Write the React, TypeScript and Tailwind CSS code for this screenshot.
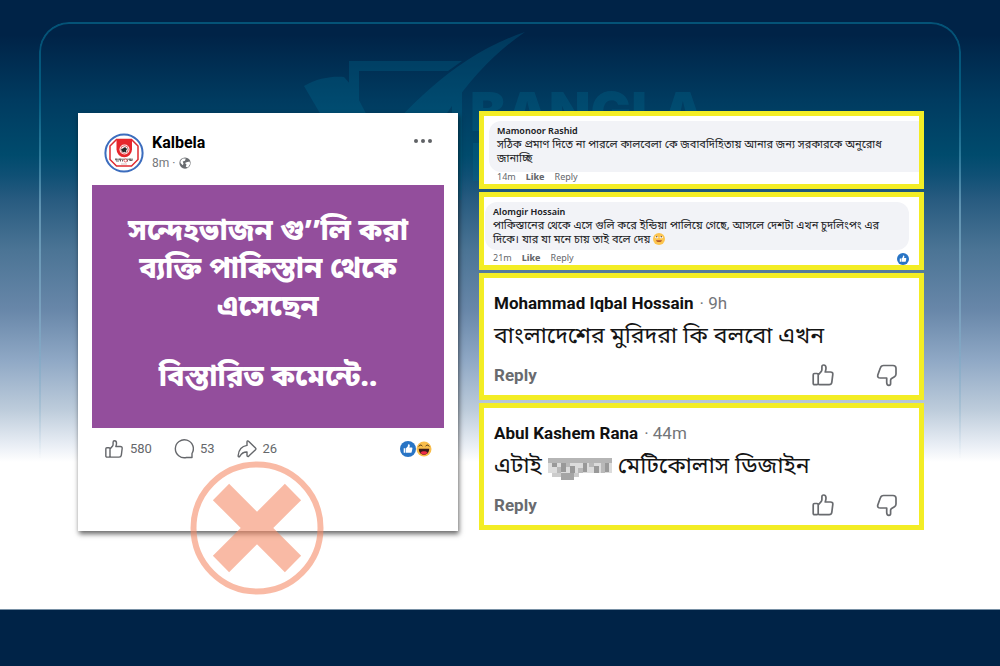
import React from "react";

const thumb =
  "M3.500 10.500h2.500c.8 0 1.200.5 1.200 1.300v8.700c0 .8-.5 1.200-1.300 1.200H3.500c-.8 0-1.300-.5-1.300-1.300v-8.600c0-.8.4-1.300 1.300-1.300ZM7.200 12l3.100-3.600c.5-.6.6-1.300.6-2.200V3.800C10.900 2.500 11.600 2 12.600 2c1.500 0 2.400 1.200 2.400 3 0 1.500-.3 2.700-.8 4h5.300c1.700 0 2.500 1 2.300 2.400l-1 8c-.2 1.400-1.200 2.300-2.700 2.300H8.500c-.9 0-1.300-.4-1.300-1.200";

function Thumb({ className }: { className: string }) {
  return (
    <svg viewBox="0 0 24 24" className={className} fill="none" stroke="currentColor" strokeWidth="1.700" strokeLinejoin="round" strokeLinecap="round" aria-hidden="true">
      <path d={thumb} />
    </svg>
  );
}

function ThumbDown() {
  return (
    <svg viewBox="0 0 24 24" className="size-6" fill="none" stroke="currentColor" strokeWidth="1.700" strokeLinejoin="round" aria-hidden="true">
      <path d="M8.500 2.500h9.500c2 0 3 .9 3 2.700v5.800c0 1.300-.5 2.100-1.500 2.700l-2.900 1.700c-.7.400-1 1-1 1.800v3.200c0 1.300-.7 1.900-1.700 1.900-1.500 0-2.200-1-2.200-2.800v-4.500H5.300c-2.100 0-3-1.200-2.500-3l2.500-7c.5-1.600 1.500-2.500 3.200-2.500Z" />
    </svg>
  );
}

function LikeBadge({ className }: { className: string }) {
  return (
    <svg viewBox="0 0 16 16" className={className} role="img" aria-label="Like">
      <circle cx="8" cy="8" r="8" fill="#2874c5" />
      <path d="M3.700 7.300h1.700v4.500H3.700zM6 7.300l1.700-1.700c.3-.4.200-1 .2-1.500 0-.7.500-1 1-.9.800.2 1 1 .9 1.800l-.4 1.600h2c.8 0 1.200.5 1 1.200l-.7 3.100c-.2.700-.6.900-1.300.9H6z" fill="#fff" />
    </svg>
  );
}

function Smile({ laugh }: { laugh?: boolean }) {
  return laugh ? (
    <svg viewBox="0 0 16 16" className="size-4" role="img" aria-label="Haha">
      <circle cx="8" cy="8" r="7.500" fill="#f9bd4a" />
      <path d="M2.800 7.800h10.400c0 3.800-2.200 6-5.200 6s-5.200-2.200-5.200-6Z" fill="#3c1b18" />
      <path d="M4.500 11.500c1.500-1.600 5.500-1.600 7 0-1.500 2.700-5.500 2.700-7 0Z" fill="#ef2b46" />
      <path d="M2.800 5.500c.8-1.800 2.700-1.900 3.600-.2M9.600 5.300c.9-1.700 2.800-1.600 3.600.2" stroke="#473017" strokeWidth="1" fill="none" />
    </svg>
  ) : (
    <svg viewBox="0 0 16 16" className="inline size-3 align-[-2px]" role="img" aria-label="Smiling face">
      <circle cx="8" cy="8" r="8" fill="#fcc44e" />
      <ellipse cx="5" cy="5.500" rx="1.900" ry="1.600" fill="#fff" />
      <ellipse cx="11" cy="5.500" rx="1.900" ry="1.600" fill="#fff" />
      <circle cx="5" cy="5" r="1" fill="#6b4519" />
      <circle cx="11" cy="5" r="1" fill="#6b4519" />
      <path d="M4 9.500h8c-.5 3.500-7.500 3.500-8 0Z" fill="#b0552a" />
    </svg>
  );
}

function Avatar() {
  return (
    <svg viewBox="0 0 40 40" className="size-10 shrink-0" role="img" aria-label="Kalbela logo">
      <circle cx="20" cy="20" r="18.600" fill="#fff" stroke="#3c6dbe" strokeWidth="2" />
      <path d="M12.500 6.500h15l6.500 6.500v13.500L27.500 33h-15L6 26.500V13Z" fill="#fff" stroke="#df2b31" strokeWidth="1.500" />
      <path d="M12.500 6h15.500v10.500a7.700 7.700 0 0 1-15.500 0Z" fill="#e7262c" />
      <circle cx="20.500" cy="16.500" r="5" fill="#fff" />
      <circle cx="20.500" cy="16.500" r="3.800" fill="none" stroke="#df2b31" strokeWidth=".8" />
      <path d="m16.500 16.500 5-3 .5 1.600 2.500.5-2 1.400v3l-2.500-1-1 1Z" fill="#252525" stroke="#fff" strokeWidth=".5" />
      <path d="M11 26.200h18M12 28h3m1.500-1v1.500m2-1.500v1.500m5-1.500v1.500m2-1h3M12 25.500v2m4-2v2m10-2v2" stroke="#302626" strokeWidth=".7" />
      <circle cx="21.500" cy="27.500" r="1.500" fill="#fff" stroke="#d93035" strokeWidth=".7" />
      <path d="M17 31h6" stroke="#b99" strokeWidth=".6" />
    </svg>
  );
}

function Watermark() {
  return (
    <div className="pointer-events-none absolute inset-x-0 top-0 mx-auto h-60 w-[1000px] text-[#006c91] opacity-30" aria-hidden="true">
      <svg viewBox="0 0 1000 240" className="size-full" fill="currentColor">
        <path d="M304 86c13-8 29-10 40-9l7 8 50 95h-42Z" />
        <path d="M349 61h113l-14 10h-89v119h93V95l10-12v117H349Z" />
        <path d="M365 155c47-51 91-100 160-123-57 39-87 94-121 151-16-1-28-8-39-28Z" />
        <rect x="473" y="143" width="8" height="38" />
        <text x="470" y="131" fontFamily="Inter" fontWeight="900" fontSize="54">BANGLA</text>
      </svg>
    </div>
  );
}

function SmallActions({ time }: { time: string }) {
  return (
    <div className="flex gap-2.5 text-[9px] leading-3 text-[#65676b]">
      <span>{time}</span>
      <button className="font-bold">Like</button>
      <button>Reply</button>
    </div>
  );
}

function LargeComment({ name, time, children }: { name: string; time: string; children: React.ReactNode }) {
  return (
    <article className="h-[127px] border-[5px] border-[#f3ed25] bg-white pt-[15px] pr-5 pl-2.5">
      <header className="flex gap-1.5 font-[Roboto] text-[17px] leading-5 text-[#737579]">
        <h2 className="font-bold text-[#111]">{name}</h2>
        <span>· {time}</span>
      </header>
      <p className="mt-2.5 text-[23px] leading-7 whitespace-nowrap text-[#151515]">{children}</p>
      <div className="mt-3 flex items-center justify-between text-[#696b6f]">
        <button className="font-[Roboto] text-[17px] leading-6 font-bold">Reply</button>
        <div className="flex gap-10">
          <button aria-label="Like"><Thumb className="size-6" /></button>
          <button aria-label="Dislike"><ThumbDown /></button>
        </div>
      </div>
    </article>
  );
}

export default function App() {
  return (
    <main className="relative flex min-h-screen flex-col bg-[linear-gradient(#002347_0px,#002347_35px,#003b60_100px,#004b6d_155px,#0f5075_175px,#285b80_200px,#4b7495_250px,#6887a9_310px,#8fa8c5_360px,#bdccdb_410px,#e9eef5_445px,#ffffff_462px)] font-['Noto_Sans_Bengali','Noto_Sans',sans-serif]">
      <div className="pointer-events-none absolute inset-x-[39px] top-[22px] h-[438px] rounded-t-[30px] border-2 border-b-0 border-[#087397] opacity-60 [mask-image:linear-gradient(black_25%,transparent)]" />
      <div className="pointer-events-none absolute inset-x-[39px] top-[100px] h-[360px] border-x-2 border-[#a5c0d8] opacity-50 [mask-image:linear-gradient(transparent,black_30%,black_60%,transparent)]" />
      <Watermark />
      <div className="relative grid grow grid-cols-[380fr_445fr] items-start gap-[21px] pt-[111px] pr-[76px] pb-14 pl-[78px]">
        <article className="relative mt-0.5 h-[418px] bg-white px-3.5 pt-5 shadow-[1px_3px_5px_rgba(0,0,0,0.6)]">
          <header className="flex h-[52px] items-start gap-2 pl-3 font-[Roboto]">
            <Avatar />
            <div>
              <h1 className="text-base leading-5 font-bold text-black">Kalbela</h1>
              <div className="mt-0.5 flex items-center gap-1 text-[12px] leading-4 text-[#75777b]">
                <span>8m ·</span>
                <svg viewBox="0 0 16 16" className="size-3" role="img" aria-label="Public">
                  <circle cx="8" cy="8" r="7.500" fill="#696c70" />
                  <path d="m2 5 3-3 4 0-1 3-3 1 1 3-1 2-3-3ZM10 7l4-1 1 3-3 5-3-1 1-3-2-2Z" fill="#fff" />
                </svg>
              </div>
            </div>
            <button aria-label="More" className="mr-3 ml-auto flex h-4 items-center gap-[3px]">
              <i className="size-1 rounded-full bg-[#606266]" />
              <i className="size-1 rounded-full bg-[#606266]" />
              <i className="size-1 rounded-full bg-[#606266]" />
            </button>
          </header>
          <div className="h-[243px] bg-[#934e9c] pt-[29px] text-center text-[29px] leading-[38px] font-extrabold text-white">
            <p>সন্দেহভাজন গু’’লি করা<br />ব্যক্তি পাকিস্তান থেকে<br />এসেছেন</p>
            <p className="mt-8">বিস্তারিত কমেন্টে..</p>
          </div>
          <footer className="flex h-[42px] items-center px-3 font-[Roboto] text-[13px] text-[#65676b]">
            <button className="flex items-center gap-1.5"><Thumb className="size-5" />580</button>
            <button className="ml-[22px] flex items-center gap-1.5">
              <svg viewBox="0 0 20 20" className="size-5" fill="none" stroke="currentColor" strokeWidth="1.400" strokeLinejoin="round" aria-hidden="true"><path d="M18 14.500v4h-5.500A9 9 0 1 1 18 14.500Z" /></svg>53
            </button>
            <button className="ml-[22px] flex items-center gap-1.5">
              <svg viewBox="0 0 20 20" className="size-5" fill="none" stroke="currentColor" strokeWidth="1.400" strokeLinejoin="round" aria-hidden="true"><path d="M10 3c0-1.200 1-1.400 1.800-.6l6.700 6.500c.6.600.6 1.300 0 1.900l-6.700 6.300c-.8.700-1.800.4-1.800-.6V13c-3.400-.2-5.200 1-7 4-.9 1.400-2 1-1.800-.5C1.700 10.800 4.500 7.200 10 6.400Z" /></svg>26
            </button>
            <span className="ml-auto flex"><LikeBadge className="size-4" /><Smile laugh /></span>
          </footer>
          <svg viewBox="0 0 134 134" className="absolute top-[348px] left-[112px] size-[134px]" fill="none" stroke="#f58a65" opacity=".58" role="img" aria-label="False">
            <circle cx="67" cy="67" r="63.500" strokeWidth="6" />
            <path d="M31 31 67 67 103 31M31 103 67 67 103 103" strokeWidth="23" />
          </svg>
        </article>
        <section className="flex flex-col gap-[3px]" aria-label="Comments">
          <article className="h-[78px] border-[5px] border-[#f3ed25] bg-white pt-[5px] pl-[5px]">
            <div className="h-[51px] rounded-l-xl bg-[#f2f3f7] px-2 pt-[5px] text-[#202124]">
              <h2 className="text-[9px] leading-3 font-semibold">Mamonoor Rashid</h2>
              <p className="text-[11px] leading-[14px]">সঠিক প্রমাণ দিতে না পারলে কালবেলা কে জবাবদিহিতায় আনার জন্য সরকারকে অনুরোধ<br />জানাচ্ছি</p>
            </div>
            <div className="pl-2"><SmallActions time="14m" /></div>
          </article>
          <article className="h-[78px] border-[5px] border-[#f3ed25] bg-white pt-[5px] pr-[10px] pl-px">
            <div className="h-12 rounded-xl bg-[#f2f3f7] px-2 pt-[5px] text-[#202124]">
              <h2 className="text-[9px] leading-3 font-semibold">Alomgir Hossain</h2>
              <p className="text-[11px] leading-[14px]">পাকিস্তানের থেকে এসে গুলি করে ইন্ডিয়া পালিয়ে গেছে, আসলে দেশটা এখন চুদলিংপং এর<br />দিকে। যার যা মনে চায় তাই বলে দেয় <Smile /></p>
            </div>
            <div className="mt-[3px] flex items-center justify-between pl-2"><SmallActions time="21m" /><LikeBadge className="size-3" /></div>
          </article>
          <LargeComment name="Mohammad Iqbal Hossain" time="9h">বাংলাদেশের মুরিদরা কি বলবো এখন</LargeComment>
          <LargeComment name="Abul Kashem Rana" time="44m">
            এটাই <svg viewBox="0 0 64 24" className="inline h-6 w-16 align-[-7px]" aria-label="Censored word" role="img">
              <path fill="#b5b5b5" d="M0 2h64v5H0z" />
              <path fill="#dcdcdc" d="M0 7h64v10H0z" />
              <path fill="#999" d="M4 7h5v4H4zM13 7h5v9h-5zM22 10h5v7h-5zM35 7h4v9h-4zM46 10h5v7h-5zM57 7h4v9h-4z" />
              <path fill="#b9b9b9" d="M9 11h4v6H9zM18 7h4v4h-4zM30 12h5v5h-5zM41 7h5v4h-5zM53 7h4v10h-4z" />
              <path fill="#ccc" d="M4 17h27v4H4z" />
              <path fill="#a5a5a5" d="M13 17h13v7H13z" />
            </svg> মেটিকোলাস ডিজাইন
          </LargeComment>
        </section>
      </div>
      <footer className="relative h-[57px] border-t border-[#7890a5] bg-[#002347]" />
    </main>
  );
}
